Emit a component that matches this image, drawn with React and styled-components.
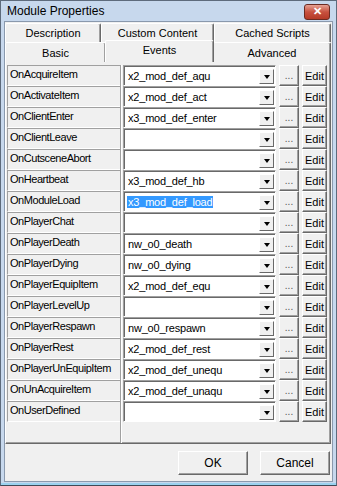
import styled, { createGlobalStyle } from 'styled-components';

const Global = createGlobalStyle`
  html, body { margin: 0; padding: 0; background: #c4d5ea; }
  body { font-family: "Liberation Sans", Arial, sans-serif; }
`

const Window = styled.div`
  width: 337px;
  height: 486px;
  box-sizing: border-box;
  border: 1px solid #5e6b7c;
  border-bottom-color: #3f4a57;
  background: #c7d8ed;
  display: flex;
  flex-direction: column;
  padding: 0 3px 3px 3px;
  box-shadow: inset 0 -2px #9ad2ef;
`

const TitleBar = styled.div`
  height: 20px;
  display: flex;
  align-items: center;
  justify-content: space-between;
  padding: 0 3px 0 3px;
  font-size: 12px;
  color: #000;
`

const CloseButton = styled.div`
  width: 24px;
  height: 14px;
  margin-top: 1px;
  border-radius: 3px;
  border: 1px solid #6b2b22;
  background: linear-gradient(#e6a193, #c8513f 50%, #b53a27);
  display: flex;
  align-items: center;
  justify-content: center;
  color: #fff;
  font-size: 11px;
  font-weight: bold;
`

const Client = styled.div`
  flex: 1;
  background: #f0f0f0;
  border: 1px solid #8a99ad;
  display: flex;
  flex-direction: column;
  padding: 1px 1px 0 0;
`

const TabRow = styled.div`
  display: grid;
  grid-template-columns: ${p => p.$cols};
  height: 19px;
  position: relative;
  z-index: ${p => p.$z || 0};
`

const Tab = styled.div`
  display: flex;
  align-items: center;
  justify-content: center;
  font-size: 11px;
  color: #000;
  box-sizing: border-box;
  border-top: 1px solid #fff;
  border-left: 1px solid #fff;
  border-right: 1px solid #696969;
  background: #f0f0f0;
  border-radius: 2px 2px 0 0;
  box-shadow: inset -1px 0 #a0a0a0;
  ${p => p.$active && `
    margin: -2px -1px 0 -1px;
    height: 22px;
    padding-bottom: 4px;
    position: relative;
    z-index: 2;
  `}
`

const Panel = styled.div`
  height: 383px;
  box-sizing: border-box;
  border-top: 1px solid #fff;
  border-left: 1px solid #fff;
  border-right: 1px solid #696969;
  border-bottom: 1px solid #696969;
  box-shadow: inset -1px -1px #a0a0a0;
  padding: 3px 2px 0 1px;
`

const Grid = styled.div`
  display: grid;
  grid-template-columns: 114px 1fr;
  height: 100%;
`

const LabelColumn = styled.div`
  border-right: 1px solid #a0a0a0;
  box-shadow: 1px 0 #fff;
  display: flex;
  flex-direction: column;
`

const Label = styled.div`
  height: 21px;
  box-sizing: border-box;
  border-top: 1px solid #a0a0a0;
  border-left: 1px solid #a0a0a0;
  border-bottom: 1px solid #fff;
  font-size: 11px;
  letter-spacing: -0.45px;
  padding: 2px 0 0 2px;
  color: #000;
  white-space: nowrap;
`

const FieldColumn = styled.div`
  display: flex;
  flex-direction: column;
  padding-left: 2px;
`

const FieldRow = styled.div`
  height: 21px;
  display: grid;
  grid-template-columns: 153px 20px 25px;
  column-gap: 3px;
  align-items: stretch;
`

const Combo = styled.div`
  box-sizing: border-box;
  border-top: 1px solid #a0a0a0;
  border-left: 1px solid #a0a0a0;
  border-right: 1px solid #fff;
  border-bottom: 1px solid #fff;
  box-shadow: inset 1px 1px #696969;
  background: #fff;
  display: flex;
  align-items: center;
  padding: 1px 1px 0 3px;
  font-size: 11px;
  letter-spacing: -0.2px;
`

const ComboText = styled.span`
  flex: 1;
  white-space: nowrap;
  overflow: hidden;
  span {
    background: ${p => (p.$selected ? '#3399ff' : 'transparent')};
    color: ${p => (p.$selected ? '#fff' : '#000')};
    padding: 0 1px;
  }
`

const ArrowButton = styled.div`
  width: 15px;
  height: 15px;
  box-sizing: border-box;
  background: #f0f0f0;
  border-top: 1px solid #fff;
  border-left: 1px solid #fff;
  border-right: 1px solid #696969;
  border-bottom: 1px solid #696969;
  display: flex;
  align-items: center;
  justify-content: center;
  &::after {
    content: '';
    border-left: 3px solid transparent;
    border-right: 3px solid transparent;
    border-top: 4px solid #000;
    margin-top: 1px;
  }
`

const Button = styled.div`
  box-sizing: border-box;
  background: #f0f0f0;
  border-top: 1px solid #fff;
  border-left: 1px solid #fff;
  border-right: 1px solid #696969;
  border-bottom: 1px solid #696969;
  box-shadow: inset -1px -1px #a0a0a0;
  display: flex;
  align-items: center;
  justify-content: center;
  font-size: ${p => (p.$small ? '10px' : '11px')};
  color: ${p => (p.$dim ? '#555' : '#000')};
`

const Footer = styled.div`
  flex: 1;
  display: flex;
  justify-content: flex-end;
  align-items: center;
  gap: 12px;
  padding-right: 1px;
`

const DialogButton = styled(Button)`
  width: 70px;
  height: 24px;
  font-size: 12px;
`

const rows = [
  ['OnAcquireItem', 'x2_mod_def_aqu'],
  ['OnActivateItem', 'x2_mod_def_act'],
  ['OnClientEnter', 'x3_mod_def_enter'],
  ['OnClientLeave', ''],
  ['OnCutsceneAbort', ''],
  ['OnHeartbeat', 'x3_mod_def_hb'],
  ['OnModuleLoad', 'x3_mod_def_load', true],
  ['OnPlayerChat', ''],
  ['OnPlayerDeath', 'nw_o0_death'],
  ['OnPlayerDying', 'nw_o0_dying'],
  ['OnPlayerEquipItem', 'x2_mod_def_equ'],
  ['OnPlayerLevelUp', ''],
  ['OnPlayerRespawn', 'nw_o0_respawn'],
  ['OnPlayerRest', 'x2_mod_def_rest'],
  ['OnPlayerUnEquipItem', 'x2_mod_def_unequ'],
  ['OnUnAcquireItem', 'x2_mod_def_unaqu'],
  ['OnUserDefined', ''],
]

export default function App() {
  return (
    <>
      <Global />
      <Window>
        <TitleBar>
          <span>Module Properties</span>
          <CloseButton>✕</CloseButton>
        </TitleBar>
        <Client>
          <TabRow $cols="96px 113px 1fr">
            <Tab>Description</Tab>
            <Tab>Custom Content</Tab>
            <Tab>Cached Scripts</Tab>
          </TabRow>
          <TabRow $cols="101px 107px 1fr" $z={1}>
            <Tab>Basic</Tab>
            <Tab $active>Events</Tab>
            <Tab>Advanced</Tab>
          </TabRow>
          <Panel>
            <Grid>
              <LabelColumn>
                {rows.map(([name]) => (
                  <Label key={name}>{name}</Label>
                ))}
              </LabelColumn>
              <FieldColumn>
                {rows.map(([name, value, selected]) => (
                  <FieldRow key={name}>
                    <Combo>
                      <ComboText $selected={selected}>
                        {value && <span>{value}</span>}
                      </ComboText>
                      <ArrowButton />
                    </Combo>
                    <Button $small $dim>...</Button>
                    <Button>Edit</Button>
                  </FieldRow>
                ))}
              </FieldColumn>
            </Grid>
          </Panel>
          <Footer>
            <DialogButton>OK</DialogButton>
            <DialogButton>Cancel</DialogButton>
          </Footer>
        </Client>
      </Window>
    </>
  )
}
